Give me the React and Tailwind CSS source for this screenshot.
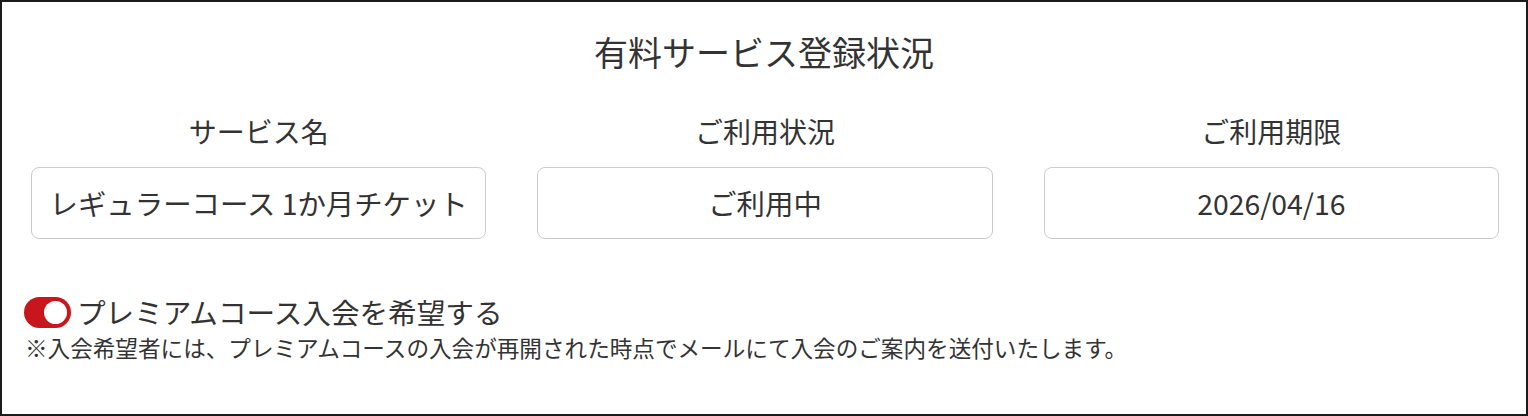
export default function App() {
  const font = { fontFamily: '"Noto Sans CJK JP", "Noto Sans", sans-serif' };
  const cols = [
    { label: "サービス名", value: "レギュラーコース 1か月チケット" },
    { label: "ご利用状況", value: "ご利用中" },
    { label: "ご利用期限", value: "2026/04/16" },
  ];
  return (
    <div
      className="w-[1528px] h-[416px] bg-white border-2 border-[#1b1b1b] flex flex-col text-[#333333]"
      style={font}
    >
      <h1 className="mt-[30px] text-center text-[34px] leading-[40px] font-normal">
        有料サービス登録状況
      </h1>
      <div className="mt-[39px] grid grid-cols-3 gap-[51px] pl-[29px] pr-[27px]">
        {cols.map((c) => (
          <div key={c.label} className="flex flex-col">
            <div className="text-center text-[28px] leading-[40px]">{c.label}</div>
            <div className="mt-[16px] h-[72px] rounded-lg border border-[#cccccc] flex items-center justify-center text-[28.4px] leading-none whitespace-nowrap">
              {c.value}
            </div>
          </div>
        ))}
      </div>
      <div className="mt-[57px] pl-[22px] flex items-center h-[32px]">
        <div className="w-[47px] h-[31px] rounded-full bg-[#c8161d] flex items-center justify-end pr-[4px]">
          <div className="w-[23px] h-[23px] rounded-full bg-white" />
        </div>
        <span className="ml-[6px] text-[28.6px] leading-[32px]">プレミアムコース入会を希望する</span>
      </div>
      <div className="mt-[5px] pl-[23px] text-[22.6px] leading-[30px]">
        ※入会希望者には、プレミアムコースの入会が再開された時点でメールにて入会のご案内を送付いたします。
      </div>
    </div>
  );
}
